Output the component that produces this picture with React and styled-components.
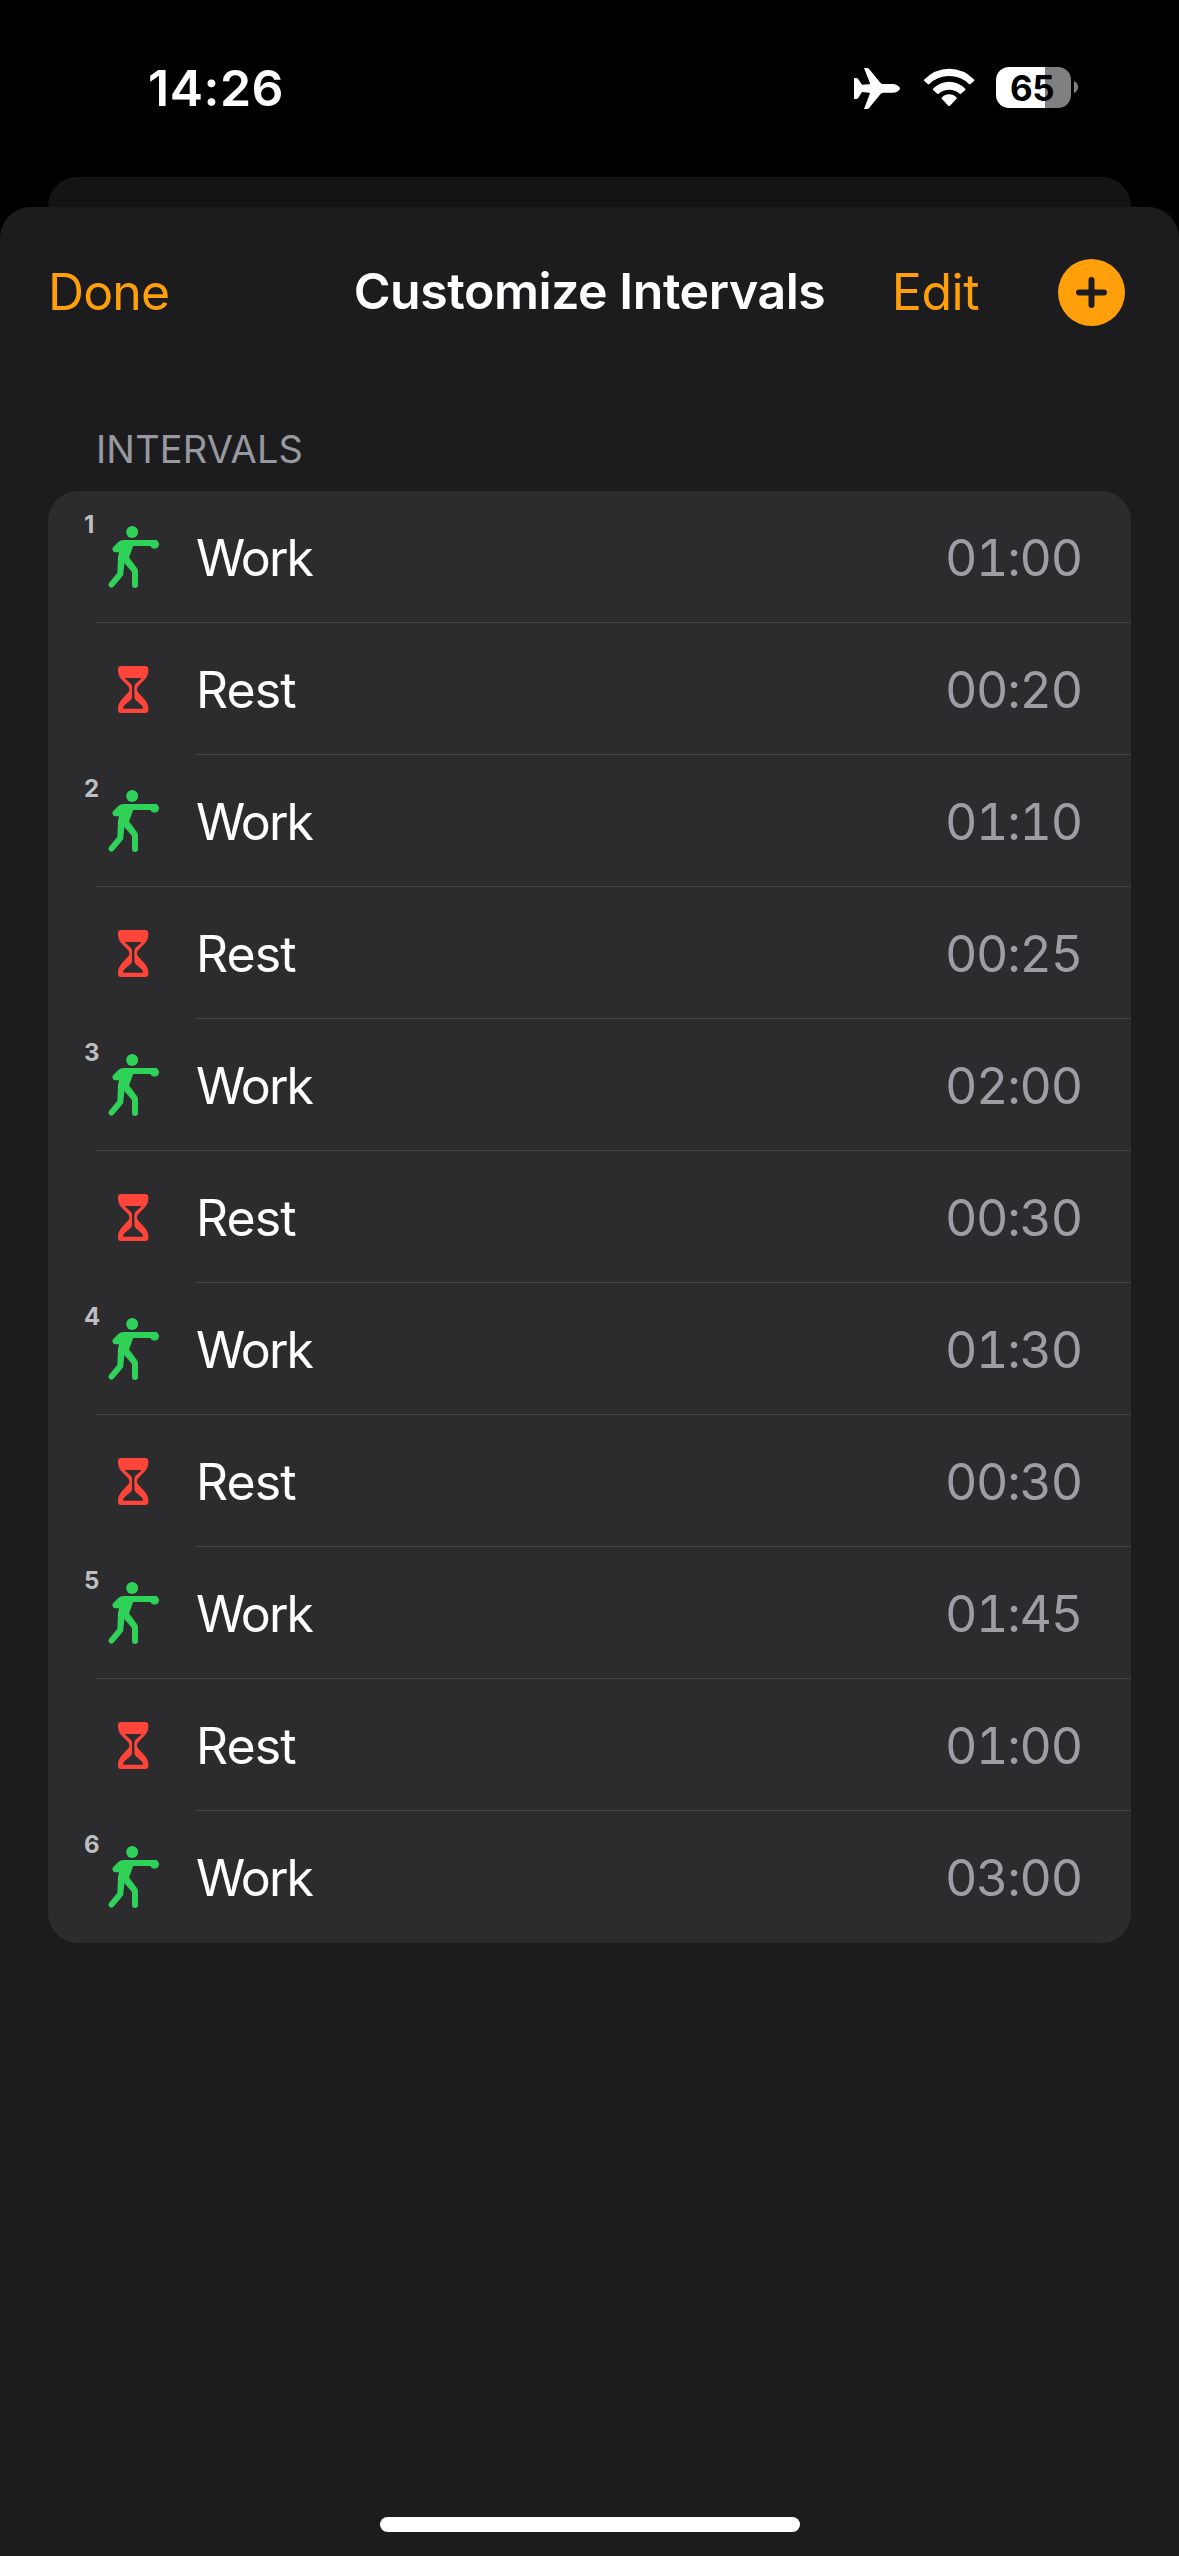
import React from "react";
import styled, { createGlobalStyle } from "styled-components";

const GlobalStyle = createGlobalStyle`
  * { box-sizing: border-box; }
  html, body { margin: 0; padding: 0; background: #000; }
  body {
    font-family: Inter, "Liberation Sans", sans-serif;
    -webkit-font-smoothing: antialiased;
  }
`;

const Screen = styled.div`
  width: 1179px;
  height: 2556px;
  display: flex;
  flex-direction: column;
  background: #000;
  overflow: hidden;
`;

const StatusBar = styled.header`
  height: 177px;
  flex: none;
  display: flex;
  justify-content: space-between;
  align-items: flex-start;
  padding: 64px 101px 0 148px;
`;

const Clock = styled.time`
  font-size: 50px;
  line-height: 48px;
  font-weight: 600;
  letter-spacing: 0.5px;
  color: #fff;
`;

const StatusIcons = styled.div`
  display: flex;
  align-items: flex-start;
`;

const Glyph = styled.svg`
  display: block;
  flex: none;
  margin-left: ${(p) => p.$gap || 0}px;
  margin-top: ${(p) => p.$drop || 0}px;
`;

const Battery = styled.div`
  width: 75px;
  height: 41px;
  margin: 3px 3px 0 21px;
  padding-right: 3px;
  border-radius: 13px;
  background: linear-gradient(to right, #fff 49px, #808080 49px);
  display: flex;
  justify-content: center;
  font-size: 35px;
  font-weight: 700;
  letter-spacing: -0.6px;
  line-height: 43px;
  color: #000;
`;

const BackSheet = styled.div`
  height: 30px;
  flex: none;
  margin: 0 48px;
  border-radius: 29px 29px 0 0;
  background: #141414;
`;

const Sheet = styled.main`
  flex: 1;
  display: flex;
  flex-direction: column;
  border-radius: 31px 31px 0 0;
  background: #1c1c1e;
`;

const NavBar = styled.nav`
  height: 168px;
  flex: none;
  display: grid;
  grid-template-columns: 308px 1fr 308px;
  align-items: start;
  padding: 51px 0 0;
`;

const NavSide = styled.div`
  display: flex;
  align-items: flex-start;
  justify-content: ${(p) => (p.$end ? "flex-end" : "flex-start")};
  padding: ${(p) => (p.$end ? "0 54px 0 0" : "0 0 0 48px")};
`;

const TextButton = styled.button`
  border: 0;
  padding: 0;
  margin: 4px ${(p) => p.$after || 0}px 0 0;
  background: none;
  font: 400 50px/60px Inter, "Liberation Sans", sans-serif;
  letter-spacing: ${(p) => p.$track || 0}px;
  color: #ff9f0a;
`;

const Title = styled.h1`
  margin: 3px 0 0;
  text-align: center;
  white-space: nowrap;
  font-size: 50px;
  line-height: 60px;
  font-weight: 600;
  letter-spacing: -0.45px;
  color: #fff;
`;

const AddButton = styled.button`
  width: 67px;
  height: 67px;
  flex: none;
  margin-top: 0.5px;
  padding: 0;
  border: 0;
  border-radius: 50%;
  background: #ff9f0a;
  display: flex;
  align-items: center;
  justify-content: center;
`;

const SectionLabel = styled.h2`
  margin: 0;
  height: 116px;
  flex: none;
  padding: 51px 0 0 96px;
  font-size: 38px;
  line-height: 46px;
  font-weight: 400;
  letter-spacing: 0.15px;
  color: #98989f;
`;

const List = styled.ul`
  list-style: none;
  margin: 0 48px;
  padding: 0;
  border-radius: 30px;
  background: #2c2c2e;
  overflow: hidden;
`;

const Row = styled.li`
  height: 132px;
  display: grid;
  grid-template-columns: 36px 24px 52px 36px 1fr auto;
  padding-right: 49px;
  background: ${(p) =>
    p.$last
      ? "none"
      : `linear-gradient(#444447, #444447) ${p.$inset}px 131px / 100% 1px no-repeat`};
`;

const Order = styled.span`
  grid-column: 2;
  margin-top: 19px;
  white-space: nowrap;
  font-size: 24px;
  line-height: 30px;
  font-weight: 700;
  color: #bfbfc1;
`;

const IconCell = styled.span`
  grid-column: 3;
  display: flex;
  align-items: flex-start;
  padding-top: ${(p) => p.$top}px;
`;

const Name = styled.span`
  grid-column: 5;
  margin-top: 37px;
  font-size: 50px;
  line-height: 60px;
  letter-spacing: ${(p) => p.$track}px;
  color: #fff;
`;

const Duration = styled.span`
  grid-column: 6;
  margin-top: 37px;
  font-size: 50px;
  line-height: 60px;
  letter-spacing: -1.2px;
  font-variant-numeric: tabular-nums;
  color: #9d9da4;
`;

const HomeArea = styled.footer`
  margin-top: auto;
  display: flex;
  justify-content: center;
  padding: 0 0 24px 1px;
`;

const HomeIndicator = styled.div`
  width: 420px;
  height: 15px;
  border-radius: 8px;
  background: #fff;
`;

const Airplane = () => (
  <Glyph $drop={3} width="48" height="43" viewBox="99 81 144 129" fill="#fff">
    <path d="M132 84 H140 Q145 84 148 88 L181 128 Q184 132 189 132 H218 Q232 132 240 144 Q240 147 238 149 Q232 158 218 158 H189 Q184 159 181 163 L148 203 Q145 207 140 207 H132 L150 160 Q150 158 147 158 L126 156 L115 173 Q112 177 108 177 H102 V114 H108 Q112 114 115 118 L126 134 L147 133 Q150 133 150 130 Z" />
  </Glyph>
);

const Wifi = () => (
  <Glyph $gap={22} $drop={4} width="52" height="39" viewBox="307 84 156 117" fill="#fff">
    <path d="M310 119 Q343 86 385.500 86 Q428 86 461 119 Q462 121 460 123 L449 133 Q447 134 445 132 Q420 108 385.500 108 Q351 108 326 132 Q324 134 322 133 L311 123 Q309 121 310 119 Z" />
    <path d="M337 146 Q359 125 385.500 125 Q412 125 434 146 Q435 148 434 150 L421 161 Q419 163 417 161 Q403 149 385.500 149 Q368 149 354 161 Q352 163 350 161 L337 150 Q336 148 337 146 Z" />
    <path d="M363 173 Q373 163 385.500 163 Q398 163 408 173 Q409 175 407 177 L388 197 Q385.500 199 383 197 L364 177 Q362 175 363 173 Z" />
  </Glyph>
);

const BatteryCap = () => (
  <Glyph $drop={17} width="4" height="12" viewBox="0 0 4 12" fill="#808080">
    <path d="M0 0 Q4 2 4 6 Q4 10 0 12 Z" />
  </Glyph>
);

const Boxer = () => (
  <Glyph width="52" height="64" viewBox="204 345 156 192" fill="#30d158">
    <circle cx="276.500" cy="366" r="18" />
    <circle cx="343.500" cy="402.500" r="13.500" />
    <path d="M250 390 H343 V408 H281 Q279 408 278 412 Q274 427 267 442 L290 473 Q294 478 294 484 V525 a9 9 0 0 1 -18 0 V486 L253 459 L250 492 Q250 496 247 499 L220 531 a9 9 0 0 1 -13 -12 L232 489 L234 440 L237 427 H226 a9.500 9.500 0 0 1 -6 -16 L235 396 Q242 390 250 390 Z" />
  </Glyph>
);

const Hourglass = () => (
  <Glyph $gap={9} width="33" height="49" viewBox="231 765 99 147" fill="#ff453a" fillRule="evenodd">
    <path d="M244 768 H315 Q325 768 325 778 V782 Q325 797 312 811 L296 827 Q291 832 291 836 V840 Q291 844 296 849 L312 866 Q325 880 325 895 V899 Q325 909 315 909 H244 Q234 909 234 899 V895 Q234 880 247 866 L263 849 Q268 844 268 840 V836 Q268 832 263 827 L247 811 Q234 797 234 782 V778 Q234 768 244 768 Z M258 804 Q253 804 257 808 L271 820 Q276 825 276 831 V862 Q276 867 271 871 L255 884 Q250 888 249 893 Q249 896 252 896 H306 Q310 896 309 893 Q308 888 303 884 L288 871 Q283 867 283 862 V831 Q283 825 288 820 L302 808 Q306 804 301 804 Z" />
  </Glyph>
);

const intervals = [
  { order: 1, name: "Work", time: "01:00" },
  { name: "Rest", time: "00:20" },
  { order: 2, name: "Work", time: "01:10" },
  { name: "Rest", time: "00:25" },
  { order: 3, name: "Work", time: "02:00" },
  { name: "Rest", time: "00:30" },
  { order: 4, name: "Work", time: "01:30" },
  { name: "Rest", time: "00:30" },
  { order: 5, name: "Work", time: "01:45" },
  { name: "Rest", time: "01:00" },
  { order: 6, name: "Work", time: "03:00" },
];

export default function App() {
  return (
    <>
      <GlobalStyle />
      <Screen>
        <StatusBar>
          <Clock>14:26</Clock>
          <StatusIcons>
            <Airplane />
            <Wifi />
            <Battery>65</Battery>
            <BatteryCap />
          </StatusIcons>
        </StatusBar>
        <BackSheet />
        <Sheet>
          <NavBar>
            <NavSide>
              <TextButton $track={-0.9}>Done</TextButton>
            </NavSide>
            <Title>Customize Intervals</Title>
            <NavSide $end>
              <TextButton $after={79} $track={-0.5}>Edit</TextButton>
              <AddButton aria-label="Add interval">
                <svg width="31" height="31" viewBox="0 0 31 31" stroke="#1c1c1e" strokeWidth="6" strokeLinecap="round">
                  <path d="M15.500 3 V28 M3 15.500 H28" />
                </svg>
              </AddButton>
            </NavSide>
          </NavBar>
          <SectionLabel>INTERVALS</SectionLabel>
          <List>
            {intervals.map((item, i) => (
              <Row key={i} $inset={item.order ? 48 : 147} $last={i === intervals.length - 1}>
                {item.order && <Order>{item.order}</Order>}
                <IconCell $top={item.order ? 34 : 42}>
                  {item.order ? <Boxer /> : <Hourglass />}
                </IconCell>
                <Name $track={item.order ? -1.9 : -0.9}>{item.name}</Name>
                <Duration>{item.time}</Duration>
              </Row>
            ))}
          </List>
          <HomeArea>
            <HomeIndicator />
          </HomeArea>
        </Sheet>
      </Screen>
    </>
  );
}
